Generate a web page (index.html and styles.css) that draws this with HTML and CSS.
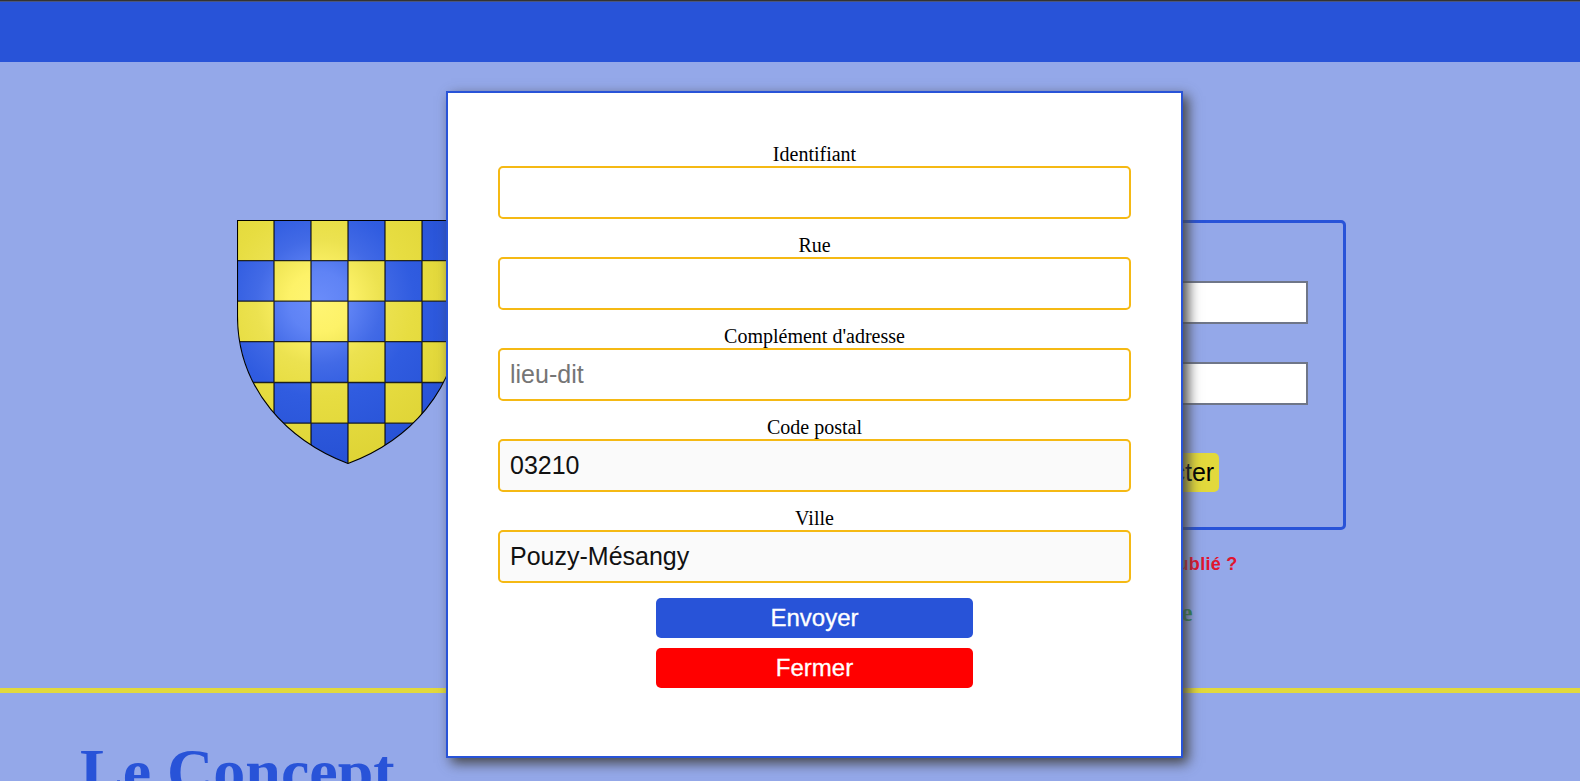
FILE: index.html
```html
<!DOCTYPE html>
<html lang="fr">
<head>
<meta charset="utf-8">
<title>Pouzy-Mésangy</title>
<link rel="stylesheet" href="styles.css">
</head>
<body>
<header class="topbar"></header>
<main>
  <section class="hero">
    <svg class="shield" viewBox="0 0 223 245" width="223" height="245">
      <defs>
        <clipPath id="outline"><path d="M.5.5H222V96C222 170 171 221 111 243.500C52 221 .5 170 .5 96Z"/></clipPath>
        <radialGradient id="gold" gradientUnits="userSpaceOnUse" cx="82" cy="82" r="190">
          <stop offset="0" stop-color="#fff573"/>
          <stop offset=".16" stop-color="#fdf268"/>
          <stop offset=".33" stop-color="#ece250"/>
          <stop offset=".5" stop-color="#e7dd41"/>
          <stop offset="1" stop-color="#dbd031"/>
        </radialGradient>
        <radialGradient id="azure" gradientUnits="userSpaceOnUse" cx="82" cy="82" r="190">
          <stop offset="0" stop-color="#6a8cfa"/>
          <stop offset=".16" stop-color="#5f83f5"/>
          <stop offset=".33" stop-color="#426ae6"/>
          <stop offset=".5" stop-color="#305ce0"/>
          <stop offset="1" stop-color="#234dd0"/>
        </radialGradient>
      </defs>
      <g clip-path="url(#outline)">
        <path fill="url(#gold)" d="M0 0H223V245H0Z"/>
        <path fill="url(#azure)" d="M37 0H74V40.700H37ZM111 0H148V40.700H111ZM185 0H223V40.700H185ZM0 40.700H37V81.200H0ZM74 40.700H111V81.200H74ZM148 40.700H185V81.200H148ZM37 81.200H74V121.700H37ZM111 81.200H148V121.700H111ZM185 81.200H223V121.700H185ZM0 121.700H37V162.500H0ZM74 121.700H111V162.500H74ZM148 121.700H185V162.500H148ZM37 162.500H74V203.200H37ZM111 162.500H148V203.200H111ZM185 162.500H223V203.200H185ZM0 203.200H37V245H0ZM74 203.200H111V245H74ZM148 203.200H185V245H148Z"/>
        <path fill="none" stroke="#000" stroke-opacity=".8" stroke-width="1.300" d="M37 0V245M74 0V245M111 0V245M148 0V245M185 0V245M0 40.700H223M0 81.200H223M0 121.700H223M0 162.500H223M0 203.200H223"/>
      </g>
      <path fill="none" stroke="#000" stroke-width="1.100" d="M.5.5H222V96C222 170 171 221 111 243.500C52 221 .5 170 .5 96Z"/>
    </svg>
    <div class="account">
      <form class="login">
        <input class="login-input" type="text" aria-label="Identifiant">
        <input class="login-input" type="password" aria-label="Mot de passe">
        <button class="login-button" type="button">Se connecter</button>
      </form>
      <a class="forgot">Mot de passe oublié ?</a>
      <a class="signup">S'inscrire</a>
    </div>
  </section>
  <section class="concept">
    <h1 class="concept-title">Le Concept</h1>
  </section>
</main>
<form class="modal">
  <label class="field">Identifiant<input class="field-input" type="text"></label>
  <label class="field">Rue<input class="field-input" type="text"></label>
  <label class="field">Complément d'adresse<input class="field-input" type="text" placeholder="lieu-dit"></label>
  <label class="field">Code postal<input class="field-input field-fixed" type="text" value="03210" readonly></label>
  <label class="field">Ville<input class="field-input field-fixed" type="text" value="Pouzy-Mésangy" readonly></label>
  <button class="action send" type="button">Envoyer</button>
  <button class="action close" type="button">Fermer</button>
</form>
</body>
</html>
```
FILE: styles.css
```css
* { box-sizing: border-box; }

body {
  margin: 0;
  height: 781px;
  overflow: hidden;
  background: #94a8e9;
  font-family: "Liberation Serif", "Times New Roman", serif;
  color: #000;
}

.topbar {
  height: 62px;
  border-top: 1px solid #333;
  background: #2853d8;
  box-shadow: inset 0 1px #4a5580;
}

.hero {
  display: flex;
  justify-content: space-between;
  align-items: flex-start;
  height: 631px;
  padding: 158px 234px 0 237px;
  border-bottom: 5px solid #e2d93c;
}

.shield { display: block; }

.account {
  display: flex;
  flex-direction: column;
  align-items: center;
  width: 411px;
}

.login {
  display: flex;
  flex-direction: column;
  align-items: center;
  width: 100%;
  height: 310px;
  padding: 58px 35px 0;
  border: 3px solid #2853d8;
  border-radius: 5px;
}

.login-input {
  width: 100%;
  height: 43px;
  margin: 0 0 38px;
  border: 2px solid #6f7688;
  background: #fff;
}

.login-button {
  height: 39px;
  margin-top: 10px;
  padding: 0 5px;
  border: 0;
  border-radius: 5px;
  background: #e2d93c;
  font: 25px "Liberation Sans", Arial, sans-serif;
  color: #000;
}

.forgot {
  margin-top: 23px;
  font: bold 18px/22px "Liberation Sans", Arial, sans-serif;
  letter-spacing: .3px;
  color: #e0142f;
}

.signup {
  margin-top: 23px;
  font-weight: bold;
  font-size: 25.4px;
  line-height: 28px;
  color: #2e8b57;
}

.concept { padding: 42px 80px 0; }

.concept-title {
  margin: 0;
  font-size: 64px;
  line-height: 74px;
  color: #2853d8;
}

.modal {
  position: absolute;
  top: 91px;
  left: 446px;
  display: flex;
  flex-direction: column;
  align-items: center;
  width: 737px;
  height: 667px;
  padding: 50px;
  border: 2px solid #2853d8;
  background: #fff;
  box-shadow: 5px 5px 12px 0 #444;
}

.field {
  width: 100%;
  margin-bottom: 15px;
  font-size: 20px;
  line-height: 23px;
  text-align: center;
}

.field-input {
  display: block;
  width: 100%;
  height: 53px;
  margin: 0;
  padding: 0 10px;
  border: 2px solid #f5b914;
  border-radius: 5px;
  background: #fff;
  font: 25px "Liberation Sans", Arial, sans-serif;
  color: #111;
}

.field-input::placeholder { color: #757575; }

.field-fixed { background: #fafafa; }

.action {
  width: 317px;
  height: 40px;
  margin: 0 0 10px;
  padding: 0;
  border: 0;
  border-radius: 5px;
  font: 24px "Liberation Sans", Arial, sans-serif;
  -webkit-text-stroke: .3px #fff;
  color: #fff;
}

.send { background: #2853d8; }

.close { background: #f00; }
```
